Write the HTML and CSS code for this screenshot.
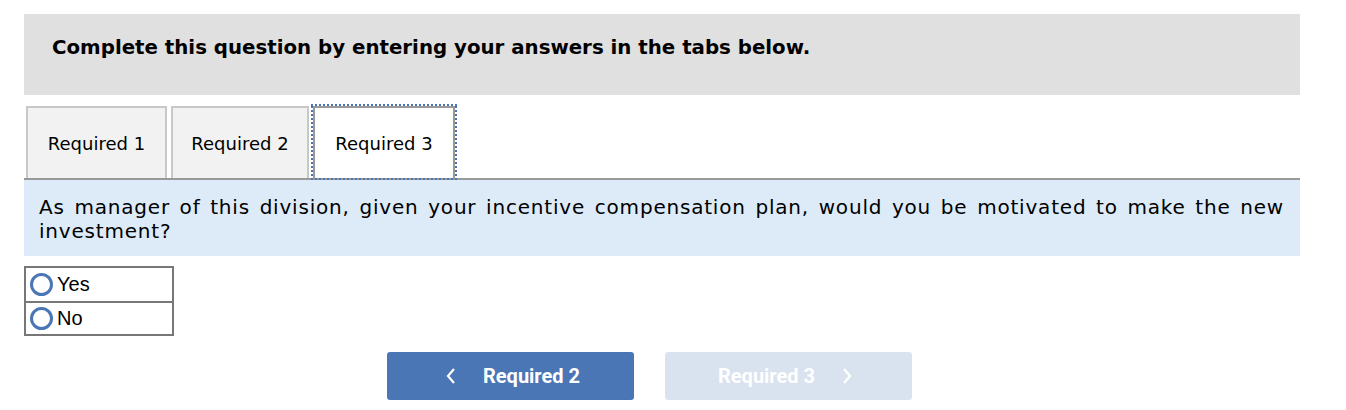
FILE: index.html
```html
<!DOCTYPE html>
<html>
<head>
<meta charset="utf-8">
<link rel="stylesheet" href="styles.css">
</head>
<body>
<div class="page">
  <div class="header">Complete this question by entering your answers in the tabs below.</div>
  <div class="tabs">
    <div class="tab">Required 1</div>
    <div class="tab">Required 2</div>
    <div class="tab active">Required 3</div>
  </div>
  <div class="question">As manager of this division, given your incentive compensation plan, would you be motivated to make the new investment?</div>
  <table class="choices">
    <tr><td><span class="radio"></span>Yes</td></tr>
    <tr><td><span class="radio"></span>No</td></tr>
  </table>
  <div class="nav">
    <button class="btn prev"><svg class="chev" width="12" height="18" viewBox="0 0 12 18"><path d="M9 2 L3 9 L9 16" fill="none" stroke="#fff" stroke-width="2.2"/></svg><span>Required 2</span></button>
    <button class="btn next"><span>Required 3</span><svg class="chev" width="12" height="18" viewBox="0 0 12 18"><path d="M3 2 L9 9 L3 16" fill="none" stroke="#fff" stroke-width="2.2"/></svg></button>
  </div>
</div>
</body>
</html>
```
FILE: styles.css
```css
html, body { margin: 0; padding: 0; background: #fff; }
body { font-family: "DejaVu Sans", Verdana, sans-serif; color: #000; }
.page { padding: 14px 46px 0 24px; width: 1276px; }
.header {
  background: #e0e0e0;
  height: 81px;
  box-sizing: border-box;
  padding: 22px 0 0 28px;
  font-weight: bold;
  font-size: 19.8px;
  line-height: 24px;
}
.tabs {
  display: flex;
  margin-top: 11px;
  padding-left: 2px;
  border-bottom: 2px solid #999;
  height: 72px;
  align-items: flex-end;
}
.tab {
  box-sizing: border-box;
  height: 72px;
  border: 2px solid #c8c8c8;
  border-bottom: none;
  background: #f2f2f2;
  font-size: 18px;
  display: flex;
  align-items: center;
  justify-content: center;
  margin-right: 4px;
}
.tab:nth-child(1) { width: 141px; }
.tab:nth-child(2) { width: 138px; margin-right: 4px; }
.tab.active {
  position: relative;
  width: 142px;
  background: #fff;
  border-color: #999;
}
.tab.active::after {
  content: "";
  position: absolute;
  left: -4px;
  right: -4px;
  top: -4px;
  bottom: -2px;
  pointer-events: none;
  background:
    linear-gradient(90deg, #4a76b5 50%, transparent 0) top left / 4px 2px repeat-x,
    linear-gradient(90deg, #4a76b5 50%, transparent 0) bottom left / 4px 2px repeat-x,
    linear-gradient(0deg, #4a76b5 50%, transparent 0) top left / 2px 4px repeat-y,
    linear-gradient(0deg, #4a76b5 50%, transparent 0) top right / 2px 4px repeat-y;
}
.question {
  background: #ddebf8;
  font-size: 20px;
  letter-spacing: 0.8px;
  line-height: 24px;
  text-align: justify;
  padding: 15px 16px 13px 15px;
}
.choices {
  margin-top: 10px;
  border-collapse: collapse;
  width: 150px;
  font-family: "Liberation Sans", Arial, sans-serif;
  font-size: 20px;
}
.choices td {
  border: 2px solid #777;
  height: 33px;
  box-sizing: border-box;
  padding: 0 0 0 4px;
  vertical-align: middle;
}
.choices tr:first-child td { height: 35px; }
.radio {
  display: inline-block;
  box-sizing: border-box;
  width: 23px;
  height: 23px;
  border: 3px solid #4a76b5;
  border-radius: 50%;
  vertical-align: middle;
  margin-right: 4px;
  margin-top: -3px;
}
.nav {
  display: flex;
  gap: 31px;
  margin-top: 16px;
  padding-left: 363px;
}
.btn {
  width: 247px;
  height: 48px;
  border: none;
  border-radius: 3px;
  font-family: Roboto, "Liberation Sans", sans-serif;
  font-weight: bold;
  font-size: 20px;
  color: #fff;
  display: flex;
  align-items: center;
  justify-content: center;
  gap: 26px;
  padding: 0;
}
.prev { background: #4a76b5; padding-left: 4px; }
.next { background: #d9e3ef; padding-right: 6px; }
.chev { display: block; }
```
